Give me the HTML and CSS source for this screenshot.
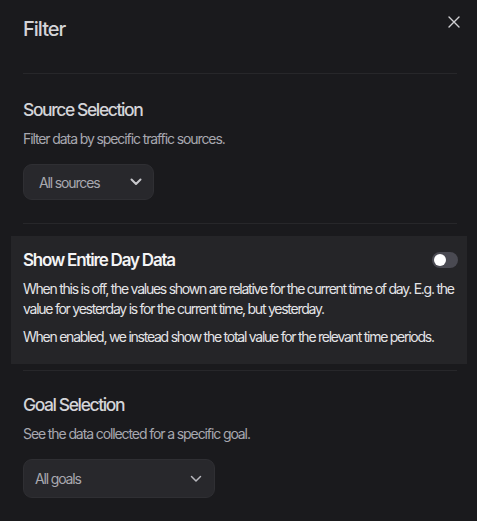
FILE: index.html
```html
<!DOCTYPE html>
<html lang="en">
<head>
<meta charset="utf-8">
<title>Filter</title>
<link rel="stylesheet" href="styles.css">
</head>
<body>
<div class="panel">
  <header class="panel-header">
    <h1 class="panel-title">Filter</h1>
    <button class="close-btn" aria-label="Close">
      <svg width="12" height="12" viewBox="0 0 12 12" fill="none" stroke="currentColor" stroke-width="1.4" stroke-linecap="round"><path d="M1 1L11 11M11 1L1 11"/></svg>
    </button>
  </header>
  <hr class="divider divider-top">
  <section class="section">
    <h2 class="section-title">Source Selection</h2>
    <p class="section-desc">Filter data by specific traffic sources.</p>
    <div class="select select-sources">
      <span class="select-label">All sources</span>
      <svg class="chev chev-bold" width="12" height="8" viewBox="0 0 12 8" fill="none" stroke="currentColor" stroke-width="2" stroke-linecap="round" stroke-linejoin="round"><path d="M1.5 1.5L6 6L10.5 1.5"/></svg>
    </div>
  </section>
  <hr class="divider divider-mid">
  <section class="section highlight">
    <div class="highlight-head">
      <h2 class="highlight-title">Show Entire Day Data</h2>
      <span class="toggle"><span class="knob"></span></span>
    </div>
    <p class="highlight-text">When this is off, the values shown are relative for the current time of day. E.g. the value for yesterday is for the current time, but yesterday.</p>
    <p class="highlight-text second">When enabled, we instead show the total value for the relevant time periods.</p>
  </section>
  <hr class="divider divider-low">
  <section class="section section-goal">
    <h2 class="section-title">Goal Selection</h2>
    <p class="section-desc">See the data collected for a specific goal.</p>
    <div class="select select-goals">
      <span class="select-label">All goals</span>
      <svg class="chev" width="12" height="8" viewBox="0 0 12 8" fill="none" stroke="currentColor" stroke-width="1.5" stroke-linecap="round" stroke-linejoin="round"><path d="M1.5 1.5L6 6L10.5 1.5"/></svg>
    </div>
  </section>
</div>
</body>
</html>
```
FILE: styles.css
```css
* { box-sizing: border-box; }
html, body {
  margin: 0;
  padding: 0;
  background: #1a1a1d;
}
body {
  font-family: Inter, "Noto Sans", "Liberation Sans", sans-serif;
  color: #d4d4d8;
  width: 477px;
  height: 521px;
  overflow: hidden;
}
.panel {
  padding: 17px 20px 0 23px;
}
.panel-header {
  display: flex;
  justify-content: space-between;
  align-items: flex-start;
}
.panel-title {
  margin: 0;
  font-size: 20px;
  line-height: 24px;
  font-weight: 500;
  color: #d4d4d8;
  letter-spacing: -1px;
}
.close-btn {
  background: none;
  border: 0;
  padding: 0;
  margin: -1px -3px 0 0;
  width: 12px;
  height: 12px;
  color: #d0d0d4;
  display: flex;
}
.divider {
  border: 0;
  height: 1px;
  background: #27272a;
  margin: 0;
}
.divider-top { margin-top: 32px; }
.divider-mid { margin-top: 23px; }
.divider-low { margin-top: 6px; }
.section-title {
  margin: 0;
  font-size: 17.5px;
  line-height: 24px;
  font-weight: 500;
  color: #d4d4d8;
  letter-spacing: -1.4px;
}
.section > .section-title { margin-top: 24px; }
.section-goal > .section-title { margin-top: 22px; }
.section-desc {
  margin: 7px 0 0;
  font-size: 14px;
  line-height: 20px;
  color: #a8a8b0;
  letter-spacing: -1.1px;
}
.select {
  display: flex;
  align-items: center;
  justify-content: space-between;
  background: #28282c;
  border: 1px solid #2f2f33;
  border-radius: 9px;
  margin-top: 15px;
  color: #a8a8b0;
  font-size: 14px;
  letter-spacing: -1.15px;
}
.select-sources {
  width: 131px;
  height: 36px;
  padding: 0 11px 0 15px;
}
.select-goals {
  width: 192px;
  height: 39px;
  padding: 0 12px 0 11px;
}
.chev { color: #b8b8be; }
.chev-bold { color: #c8c8cc; }
.highlight {
  background: #252528;
  margin: 12px -10px 0 -12px;
  padding: 12px 10px 17px 12px;
}
.highlight-head {
  display: flex;
  justify-content: space-between;
  align-items: center;
}
.highlight-title {
  margin: 0;
  font-size: 17px;
  line-height: 24px;
  font-weight: 600;
  color: #f4f4f5;
  letter-spacing: -1.2px;
}
.toggle {
  width: 26px;
  height: 16px;
  border-radius: 8px;
  background: #4a4a52;
  display: flex;
  align-items: center;
  padding: 0 2px;
  margin-right: -1px;
}
.knob {
  width: 12px;
  height: 12px;
  border-radius: 50%;
  background: #ffffff;
}
.highlight-text {
  margin: 7px 0 0;
  font-size: 14px;
  line-height: 20px;
  color: #e4e4e7;
  letter-spacing: -1.25px;
}
.highlight-text.second { margin-top: 8px; }
```
